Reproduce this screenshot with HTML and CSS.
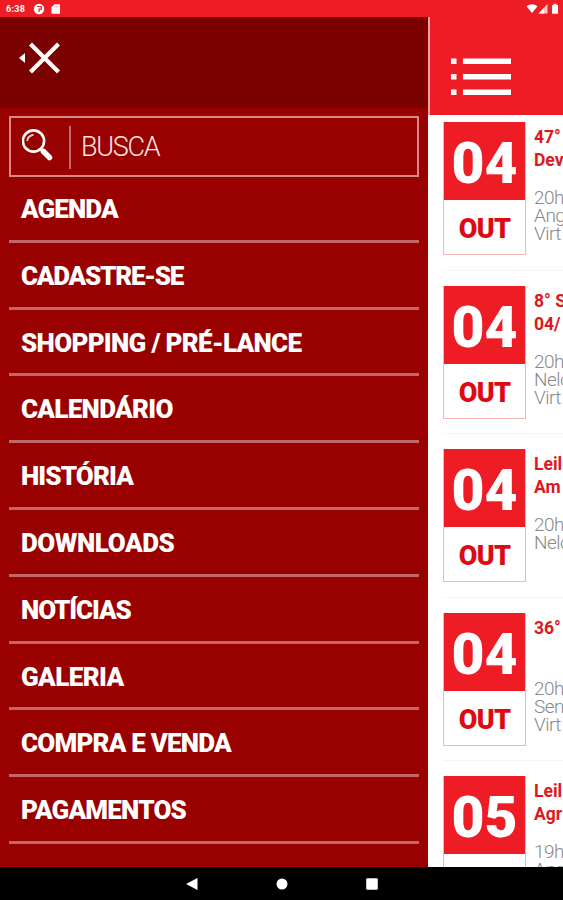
FILE: index.html
```html
<!DOCTYPE html>
<html lang="pt-BR">
<head>
    <meta charset="UTF-8">
    <meta name="viewport" content="width=device-width, initial-scale=1.0">
    <title>Agenda de Leilões</title>
    <link rel="stylesheet" href="styles.css">
</head>
<body>
    <div class="statusbar">
        <span class="time">6:38</span>
        <svg class="status-left" width="30" height="12" viewBox="0 0 30 12">
            <circle cx="6" cy="6" r="5.2" fill="#fff"/>
            <path d="M4 3.5h4.3v2.6H6v3" fill="none" stroke="#ee1c25" stroke-width="1.2"/>
            <path d="M21.5 1.2H27v9.6h-8.6V4.3z" fill="#fff"/>
            <path d="M21.7 3v1.7M23.4 3v1.7M25.1 3v1.7" stroke="#f68a8e" stroke-width=".7"/>
        </svg>
        <svg class="status-right" width="34" height="12" viewBox="0 0 34 12">
            <path d="M.5 3.2Q6 -.8 11.5 3.2L6 10z" fill="#fff"/>
            <path d="M12.5 10.5L21.5 1v9.5z" fill="#fff" fill-opacity=".75"/>
            <path d="M12.5 10.5L18 4.7v5.8z" fill="#fff"/>
            <path d="M26 2h1.5V.8h3V2H32v8.7h-6z" fill="#fff"/>
        </svg>
    </div>

    <div class="screen">
        <nav class="drawer">
            <div class="drawer-header">
                <svg width="44" height="36" viewBox="0 0 44 36">
                    <path d="M7 13v10l-6-5z" fill="#fff"/>
                    <path d="M12.5 4l28 28M40.5 4l-28 28" stroke="#fff" stroke-width="4.2"/>
                </svg>
            </div>
            <div class="search">
                <svg class="search-icon" width="34" height="34" viewBox="0 0 34 34">
                    <circle cx="11.5" cy="12" r="10.6" fill="none" stroke="#fff" stroke-width="2.6"/>
                    <path d="M5.2 12q.3-5 6.3-6.3" fill="none" stroke="#eec4b8" stroke-width="2"/>
                    <path d="M18.5 20l3 3" stroke="#fff" stroke-width="2.5"/>
                    <path d="M21.5 22.5l6 6" stroke="#fff" stroke-width="5.5" stroke-linecap="round"/>
                </svg>
                <span class="search-text">BUSCA</span>
            </div>
            <ul class="menu">
                <li><span class="agenda">AGENDA</span></li>
                <li><span class="cadastre">CADASTRE-SE</span></li>
                <li><span class="shopping">SHOPPING / PRÉ-LANCE</span></li>
                <li><span class="calendario">CALENDÁRIO</span></li>
                <li><span class="historia">HISTÓRIA</span></li>
                <li><span class="downloads">DOWNLOADS</span></li>
                <li><span class="noticias">NOTÍCIAS</span></li>
                <li><span class="galeria">GALERIA</span></li>
                <li><span class="compra">COMPRA E VENDA</span></li>
                <li><span class="pagamentos">PAGAMENTOS</span></li>
            </ul>
        </nav>

        <main class="content">
            <header class="topbar">
                <svg width="62" height="40" viewBox="0 0 62 40">
                    <path d="M1 1.5h5.5V7H1zM1 17h5.5v5.5H1zM1 32.5h5.5V38H1zM13 1.5h48V7H13zM13 17h48v5.5H13zM13 32.5h48V38H13z" fill="#fff"/>
                </svg>
            </header>
            <div class="events">
                <article class="event">
                    <div class="date"><div class="day">04</div><div class="month">OUT</div></div>
                    <div class="info">
                        <h2>47°<br>Dev</h2>
                        <p>20h<br>Ang<br>Virt</p>
                    </div>
                </article>
                <article class="event">
                    <div class="date"><div class="day">04</div><div class="month">OUT</div></div>
                    <div class="info">
                        <h2>8° S<br>04/</h2>
                        <p>20h<br>Nelo<br>Virt</p>
                    </div>
                </article>
                <article class="event">
                    <div class="date"><div class="day">04</div><div class="month">OUT</div></div>
                    <div class="info">
                        <h2>Leil<br>Am</h2>
                        <p>20h<br>Nelo</p>
                    </div>
                </article>
                <article class="event">
                    <div class="date"><div class="day">04</div><div class="month">OUT</div></div>
                    <div class="info">
                        <h2>36°</h2>
                        <p>20h<br>Sen<br>Virt</p>
                    </div>
                </article>
                <article class="event">
                    <div class="date"><div class="day">05</div><div class="month">OUT</div></div>
                    <div class="info">
                        <h2>Leil<br>Agr</h2>
                        <p>19h0<br>Ang</p>
                    </div>
                </article>
            </div>
        </main>
    </div>

    <div class="navbar">
        <svg width="14" height="14" viewBox="0 0 14 14"><path d="M12.5 1v12L1 7z" fill="#fff"/></svg>
        <svg width="14" height="14" viewBox="0 0 14 14"><circle cx="7" cy="7" r="5.5" fill="#fff"/></svg>
        <svg width="14" height="14" viewBox="0 0 14 14"><rect x="1.2" y="1.2" width="11.6" height="11.6" rx="1" fill="#fff"/></svg>
    </div>
</body>
</html>
```
FILE: styles.css
```css
* {
    box-sizing: border-box;
}

body {
    margin: 0;
    height: 900px;
    display: flex;
    flex-direction: column;
    overflow: hidden;
    font-family: Roboto, "Liberation Sans", sans-serif;
}

.statusbar {
    height: 17px;
    display: flex;
    align-items: center;
    padding: 0 3px 0 6px;
    background-color: #ee1c25;
}

.time {
    width: 27px;
    color: #fff;
    font-size: 9px;
    font-weight: 700;
    letter-spacing: 0.3px;
}

.status-right {
    margin-left: auto;
}

.screen {
    height: 850px;
    display: flex;
    overflow: hidden;
}

.drawer {
    width: 428px;
    flex-shrink: 0;
    background-color: #990000;
}

.drawer-header {
    height: 91px;
    padding: 23px 0 0 18px;
    background-color: #7b0000;
}

.search {
    display: flex;
    height: 61px;
    margin: 8px 9px 0;
    padding: 8px 0 6px 11px;
    border: 2px solid #d58a8a;
}

.search-icon {
    margin-top: 3px;
}

.search-text {
    margin-left: 13px;
    padding-left: 10px;
    border-left: 2px solid #c46a6a;
    color: #fbe5e0;
    font-size: 27px;
    font-weight: 300;
    line-height: 42px;
    letter-spacing: -1.3px;
}

.menu {
    list-style-type: none;
    margin: -1px 9px 0;
    padding: 0;
}

.menu li {
    height: 66.8px;
    padding: 0 0 0 12px;
    border-bottom: 3px solid #c26666;
    color: #fff;
    font-size: 26px;
    font-weight: 900;
    line-height: 67px;
    white-space: nowrap;
}

.agenda, .historia {
    letter-spacing: -0.9px;
}

.cadastre {
    letter-spacing: -1.25px;
}

.shopping, .calendario {
    letter-spacing: -0.7px;
}

.downloads {
    letter-spacing: -0.45px;
}

.noticias {
    letter-spacing: -1.1px;
}

.galeria {
    letter-spacing: -0.6px;
}

.compra, .pagamentos {
    letter-spacing: -0.8px;
}

.content {
    flex: 1;
    min-width: 0;
    overflow: hidden;
    background-color: #fff;
}

.topbar {
    height: 98px;
    padding: 40px 0 0 20px;
    border-left: 2px solid #f8a0a4;
    background-color: #ee1c25;
}

.event {
    display: flex;
    height: 163.5px;
    margin-left: 15px;
    padding-top: 15px;
    border-bottom: 1px solid #f5f5f5;
}

.event:first-child {
    height: 155.5px;
    padding-top: 7px;
}

.date {
    width: 83px;
    height: 133px;
    flex-shrink: 0;
    border: 1px solid #f7b4b7;
    text-align: center;
}

.day {
    height: 78px;
    margin: -1px 0 0;
    background-color: #ee1c25;
    color: #fff;
    font-size: 57px;
    font-weight: 900;
    line-height: 84px;
}

.month {
    color: #dd0a14;
    font-size: 27px;
    font-weight: 900;
    line-height: 59px;
    letter-spacing: -0.7px;
}

.info {
    padding-left: 8px;
    white-space: nowrap;
}

.info h2 {
    height: 60px;
    margin: 4px 0 0;
    color: #dd1820;
    font-size: 17.5px;
    font-weight: 700;
    line-height: 23px;
}

.info p {
    margin: 3px 0 0;
    color: #888;
    font-size: 19px;
    font-weight: 300;
    line-height: 18px;
    letter-spacing: -0.5px;
}

.navbar {
    height: 33px;
    display: flex;
    justify-content: center;
    align-items: center;
    gap: 76px;
    background-color: #000;
}
```
